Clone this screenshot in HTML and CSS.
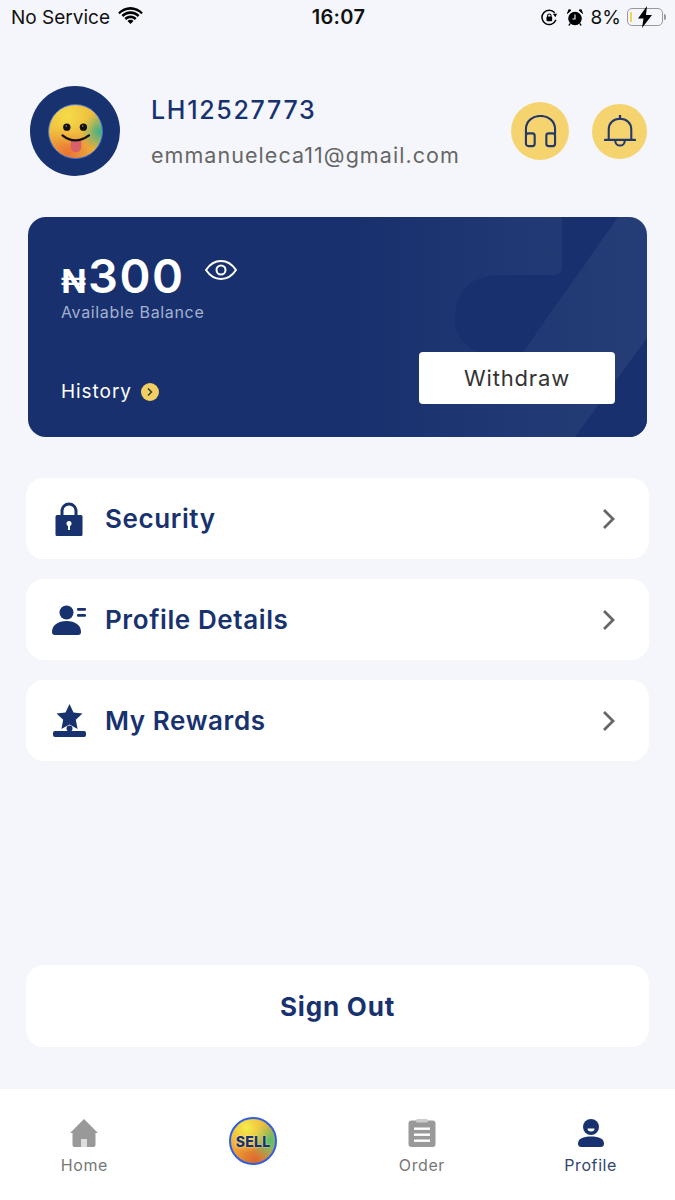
FILE: index.html
```html
<!DOCTYPE html>
<html>
	<head>
		<meta charset="utf-8" />
		<title>Profile</title>
		<link rel="stylesheet" href="styles.css">
	</head>
	<body>
		<div class="page">
			<div class="status">
				<div class="status_left">
					<span>No Service</span>
					<svg class="wifi" viewBox="0 0 26 18"><path d="M13 3C8.500 3 4.500 4.800 1.500 7.700L0 5.700C3.500 2.300 8 0 13 0s9.500 2.300 13 5.700l-1.500 2C21.500 4.800 17.500 3 13 3z"/><path d="M13 7.500c-3 0-5.700 1.200-7.700 3.100L3.500 8.400C6 6 9.300 4.500 13 4.500S20 6 22.500 8.400l-1.800 2.200C18.700 8.700 16 7.500 13 7.500z"/><path d="M13 12c-1.800 0-3.400.7-4.600 1.800L6.600 11.600C8.300 10 10.500 9 13 9s4.700 1 6.400 2.600l-1.800 2.200C16.400 12.700 14.800 12 13 12z"/><path d="M13 13.500c-1.300 0-2.400.5-3.200 1.200L13 18l3.200-3.300c-.8-.7-1.900-1.200-3.200-1.200z"/></svg>
				</div>
				<div class="status_time">16:07</div>
				<div class="status_right">
					<svg class="rot" viewBox="0 0 18 18"><path d="M15.800 11.500A7.600 7.600 0 1 1 14.500 4" fill="none" stroke="#000" stroke-width="1.600"/><path d="M12.500 5h4.500l-1.800 3.800z"/><rect x="5.800" y="8" width="6" height="5" rx="1"/><path d="M7 8.500V7a1.800 1.800 0 0 1 3.600 0v1.500" fill="none" stroke="#000" stroke-width="1.100"/></svg>
					<svg class="alarm" viewBox="0 0 16 17"><circle cx="8" cy="9.500" r="6.800"/><path d="M0.500 4.500L4 1.200 1.800.700zM15.500 4.500L12 1.200 14.200.700z" stroke="#000"/><path d="M8 5.500V10H5.500" fill="none" stroke="#f4f6fc" stroke-width="1.100"/><path d="M3 14.500L2 16.500M13 14.500l1 2" stroke="#000" stroke-width="1.500"/></svg>
					<span class="pct">8%</span>
					<div class="battery">
						<div class="battery_body"><span class="battery_level"></span></div>
						<span class="battery_nub"></span>
						<svg class="bolt" viewBox="0 0 14 22"><path d="M9 0L0 12.500h5.500L4 22l10-13H8z"/></svg>
					</div>
				</div>
			</div>

			<div class="head">
				<div class="avatar">
					<div class="face">
						<svg viewBox="0 0 55 55"><circle cx="18.500" cy="23" r="3.800" fill="#111"/><circle cx="35.700" cy="23" r="3.800" fill="#111"/><circle cx="17.800" cy="21.800" r=".7" fill="#aaa"/><circle cx="35" cy="21.800" r=".7" fill="#aaa"/><path d="M22.500 36h11v7.500a5.500 5.500 0 0 1-11 0z" fill="#d9606a"/><path d="M14 31.500Q27 42 41.500 31.500" fill="none" stroke="#111" stroke-width="2.400" stroke-linecap="round"/></svg>
					</div>
				</div>
				<div class="who">
					<div class="who_id">LH12527773</div>
					<div class="who_mail">emmanueleca11@gmail.com</div>
				</div>
				<div class="round_btn headset">
					<svg viewBox="0 0 34 34"><path d="M2 20V14.500C2 6.500 8.500 1 17 1s15 5.500 15 13.500V20" fill="none" stroke="#24386a" stroke-width="2.200"/><rect x="2" y="19" width="9" height="13" rx="2.500" fill="none" stroke="#24386a" stroke-width="2.200"/><rect x="23" y="19" width="9" height="13" rx="2.500" fill="none" stroke="#24386a" stroke-width="2.200"/></svg>
				</div>
				<div class="round_btn bell">
					<svg viewBox="0 0 34 34"><path d="M5 26V15.500C5 8.500 10 4 17 4s12 4.500 12 11.500V26" fill="none" stroke="#24386a" stroke-width="2.200"/><path d="M1 26.500h32" stroke="#24386a" stroke-width="2.400" stroke-linecap="round"/><path d="M17 0.500v3.500" stroke="#24386a" stroke-width="2.400" stroke-linecap="round"/><path d="M12 27.500a5 5 0 0 0 10 0" fill="none" stroke="#24386a" stroke-width="2.200"/></svg>
				</div>
			</div>

			<div class="card">
				<svg class="card_bg" viewBox="0 0 619 220">
					<defs>
						<linearGradient id="band" x1="0" y1="0" x2="1" y2="0">
							<stop offset="0" stop-color="#fff" stop-opacity="0"/>
							<stop offset="0.8" stop-color="#fff" stop-opacity="0.05"/>
							<stop offset="1" stop-color="#fff" stop-opacity="0.06"/>
						</linearGradient>
					</defs>
					<rect x="320" y="0" width="299" height="220" fill="url(#band)"/>
					<path d="M534 0H590L495 135H450Q427 125 427 103Q427 58 474 58H526Q534 58 534 50Z" fill="#18316e"/>
					<path d="M619 121L547 220H619Z" fill="#18316e"/>
				</svg>
				<div class="balance">
					<span class="naira">₦</span><span class="amount">300</span>
					<svg class="eye" viewBox="0 0 32 20"><path d="M1 10C5 4 10 1 16 1s11 3 15 9c-4 6-9 9-15 9S5 16 1 10z" fill="none" stroke="#fff" stroke-width="2"/><circle cx="16" cy="10" r="4.500" fill="none" stroke="#fff" stroke-width="2"/></svg>
				</div>
				<div class="balance_label">Available Balance</div>
				<div class="card_foot">
					<div class="history">
						<span>History</span>
						<svg class="history_dot" viewBox="0 0 18 18"><circle cx="9" cy="9" r="9" fill="#f2cf63"/><path d="M7 5.500L10.500 9 7 12.500" fill="none" stroke="#3a3a2a" stroke-width="1.500"/></svg>
					</div>
					<div class="withdraw">Withdraw</div>
				</div>
			</div>

			<div class="rows">
				<div class="row">
					<div class="row_icon">
						<svg class="i_lock" viewBox="0 0 28 34"><path d="M7 15V9a7 7 0 0 1 14 0v6" fill="none" stroke="#18326f" stroke-width="3"/><path d="M2 13h24a1.500 1.500 0 0 1 1.500 1.500v18A1.500 1.500 0 0 1 26 34H2A1.500 1.500 0 0 1 .5 32.500v-18A1.500 1.500 0 0 1 2 13z" fill="#18326f"/><circle cx="14" cy="21.500" r="2.500" fill="#fff"/><rect x="13" y="22" width="2" height="6" fill="#fff"/></svg>
					</div>
					<span class="row_text">Security</span>
					<svg class="chev" viewBox="0 0 14 22"><path d="M2 2l9 9-9 9" fill="none" stroke="#666" stroke-width="2.800"/></svg>
				</div>
				<div class="row">
					<div class="row_icon">
						<svg class="i_person" viewBox="0 0 34 30"><circle cx="14.500" cy="7.500" r="7"/><path d="M0 27C0 20 6 16 14.500 16S29 20 29 27a3 3 0 0 1-3 3H3a3 3 0 0 1-3-3z"/><rect x="25" y="3" width="9" height="2.800" rx="1"/><rect x="25" y="9" width="9" height="2.800" rx="1"/></svg>
					</div>
					<span class="row_text">Profile Details</span>
					<svg class="chev" viewBox="0 0 14 22"><path d="M2 2l9 9-9 9" fill="none" stroke="#666" stroke-width="2.800"/></svg>
				</div>
				<div class="row">
					<div class="row_icon">
						<svg class="i_reward" viewBox="0 0 33 33"><path d="M16.500 0l4 8.500 9 1-6.700 6.300 1.800 9.200-8.100-4.600L8.400 25l1.800-9.200L3.500 9.500l9-1z"/><circle cx="16.500" cy="24.500" r="3"/><rect x="0" y="27" width="33" height="6" rx="2"/></svg>
					</div>
					<span class="row_text">My Rewards</span>
					<svg class="chev" viewBox="0 0 14 22"><path d="M2 2l9 9-9 9" fill="none" stroke="#666" stroke-width="2.800"/></svg>
				</div>
			</div>

			<div class="signout">Sign Out</div>

			<div class="tabs">
				<div class="tab">
					<svg class="tab_icon" viewBox="0 0 28 28"><path d="M14 0L28 14h-2.500v12a2 2 0 0 1-2 2h-19a2 2 0 0 1-2-2V14H0z" fill="#999"/><rect x="11" y="20" width="6" height="8" fill="#ddd"/></svg>
					<span class="tab_text">Home</span>
				</div>
				<div class="tab">
					<div class="sell"><span>SELL</span></div>
				</div>
				<div class="tab">
					<svg class="tab_icon" viewBox="0 0 28 28"><rect x="0.500" y="1.500" width="27" height="26.500" rx="3" fill="#999"/><rect x="8" y="0" width="12" height="3.500" rx="1.500" fill="#ccc"/><rect x="6" y="8.500" width="16" height="2.400" fill="#fff"/><rect x="6" y="14.500" width="16" height="2.400" fill="#fff"/><rect x="6" y="20.500" width="16" height="2.400" fill="#fff"/></svg>
					<span class="tab_text">Order</span>
				</div>
				<div class="tab on">
					<svg class="tab_icon" viewBox="0 0 26 28"><circle cx="13" cy="8" r="8" fill="#18326f"/><path d="M9.500 9.500h7a3.500 3 0 0 1-7 0z" fill="#fff"/><path d="M0 24.500C0 20 5 17.500 13 17.500S26 20 26 24.500A3.500 3.500 0 0 1 22.500 28h-19A3.500 3.500 0 0 1 0 24.500z" fill="#18326f"/></svg>
					<span class="tab_text">Profile</span>
				</div>
			</div>
		</div>
	</body>
</html>
```

FILE: styles.css
```css
*{
	margin:0;
	padding:0;
	box-sizing: border-box;
}
body{
	background:#f4f6fc;
	font-family: Inter, "Noto Sans", sans-serif;
}
svg{display: block;}
.page{
	width:675px;
	height:1200px;
	display: flex;
	flex-direction: column;
	overflow: hidden;
}

/* status bar */
.status{
	height:34px;
	display: grid;
	grid-template-columns: 1fr auto 1fr;
	align-items: center;
	padding: 0 9px 0 11px;
	font-size:19px;
	color:#111;
}
.status_left{
	display: flex;
	align-items: center;
	gap:8px;
}
.wifi{width:25px;height:17px;margin-top:-3px;}
.status_time{font-weight:600;font-size:20px;letter-spacing:.3px;}
.status_right{
	display: flex;
	align-items: center;
	justify-content: flex-end;
}
.rot{width:17px;height:17px;margin-right:9px;}
.alarm{width:16px;height:17px;margin-right:8px;}
.pct{margin-right:6px;}
.battery{
	position: relative;
	display: flex;
	align-items: center;
	width:39px;
	height:18px;
}
.battery_body{
	width:36px;
	height:18px;
	border:1px solid #999;
	border-radius:5px;
	padding:3px 2px;
}
.battery_level{
	display: block;
	width:2px;
	height:100%;
	background:#f2d45c;
}
.battery_nub{
	width:2px;
	height:6px;
	margin-left:1px;
	background:#999;
	border-radius:0 2px 2px 0;
}
.bolt{
	position: absolute;
	left:11px;
	top:-2px;
	width:14px;
	height:22px;
}

/* head */
.head{
	display: flex;
	align-items: center;
	margin-top:52px;
	padding:0 28px 0 30px;
}
.avatar{
	width:90px;
	height:90px;
	background:#18326f;
	border-radius:50%;
	display: flex;
	align-items: center;
	justify-content: center;
	flex: none;
}
.face{
	width:55px;
	height:55px;
	border-radius:50%;
	border:1.500px solid #3a6de0;
	background:
		radial-gradient(circle at 35% 20%, #f5dc4a 0, rgba(245,220,74,0) 55%),
		radial-gradient(circle at 96% 50%, #3fb08a 0, rgba(63,176,138,0) 34%),
		radial-gradient(circle at 35% 92%, #ea7434 0, rgba(234,116,52,0) 50%),
		#efb63a;
}
.face svg{width:100%;height:100%;}
.who{
	margin-left:31px;
	margin-top:2px;
	flex:1;
}
.who_id{
	font-size:25px;
	font-weight:500;
	line-height:30px;
	letter-spacing:1.700px;
	color:#18326f;
}
.who_mail{
	margin-top:16px;
	font-size:21.500px;
	line-height:28px;
	letter-spacing:1.050px;
	color:#666;
}
.round_btn{
	background:#f5d46f;
	border-radius:50%;
	display: flex;
	align-items: center;
	justify-content: center;
	flex: none;
}
.headset{width:58px;height:58px;margin-right:23px;}
.headset svg{width:33px;height:33px;}
.bell{width:55px;height:55px;}
.bell svg{width:32px;height:32px;}

/* balance card */
.card{
	position: relative;
	height:220px;
	margin:41px 28px 0;
	padding:32px 32px 33px 33px;
	background:#18316e;
	border-radius:18px;
	overflow: hidden;
	display: flex;
	flex-direction: column;
	color:#fff;
}
.card_bg{
	position: absolute;
	left:0;
	top:0;
	width:619px;
	height:220px;
}
.balance{
	position: relative;
	display: flex;
	align-items: baseline;
	height:54px;
	line-height:54px;
}
.naira{
	font-size:33px;
	font-weight:700;
	margin-right:2px;
}
.amount{
	font-size:47px;
	font-weight:600;
	letter-spacing:1.500px;
}
.eye{
	width:32px;
	height:20px;
	margin-left:21px;
	align-self: flex-start;
	margin-top:11px;
}
.balance_label{
	position: relative;
	font-size:16px;
	line-height:18px;
	letter-spacing:.65px;
	color:#a3b0cf;
}
.card_foot{
	position: relative;
	display: flex;
	justify-content: space-between;
	align-items: flex-end;
	margin-top:auto;
}
.history{
	display: flex;
	align-items: center;
	gap:9px;
	font-size:19px;
	line-height:25px;
	letter-spacing:.95px;
}
.history_dot{width:18px;height:18px;}
.withdraw{
	width:196px;
	height:52px;
	background:#fff;
	border-radius:4px;
	color:#333;
	font-size:22px;
	letter-spacing:.85px;
	display: flex;
	align-items: center;
	justify-content: center;
}

/* rows */
.rows{
	display: flex;
	flex-direction: column;
	gap:20px;
	margin:41px 26px 0;
}
.row{
	height:81px;
	background:#fff;
	border-radius:18px;
	display: flex;
	align-items: center;
	padding:0 33px 0 26px;
}
.row_icon{
	width:34px;
	display: flex;
	justify-content: center;
	fill:#18326f;
	margin-right:19px;
}
.i_lock{width:28px;height:34px;}
.i_person{width:34px;height:30px;}
.i_reward{width:33px;height:33px;}
.row_text{
	flex:1;
	font-size:26px;
	font-weight:600;
	letter-spacing:.6px;
	color:#18326f;
}
.chev{width:14px;height:22px;}

.signout{
	height:82px;
	margin:auto 26px 42px;
	background:#fff;
	border-radius:18px;
	display: flex;
	align-items: center;
	justify-content: center;
	font-size:26px;
	font-weight:700;
	letter-spacing:.8px;
	color:#18326f;
}

/* bottom tabs */
.tabs{
	height:111px;
	background:#fff;
	display: grid;
	grid-template-columns: repeat(4, 1fr);
	padding-top:29px;
}
.tab{
	display: flex;
	flex-direction: column;
	align-items: center;
}
.tab_icon{height:30px;padding:1px 0;width:28px;}
.tab_text{
	margin-top:6px;
	font-size:16px;
	line-height:22px;
	letter-spacing:.6px;
	color:#777;
}
.on .tab_text{color:#33466f;}
.sell{
	width:48px;
	height:48px;
	margin-top:-1px;
	border-radius:50%;
	border:2px solid #2f5fe0;
	display: flex;
	align-items: center;
	justify-content: center;
	background:
		radial-gradient(circle at 35% 20%, #f5ec4c 0, rgba(245,236,76,0) 55%),
		radial-gradient(circle at 88% 50%, #58bf6e 0, rgba(88,191,110,0) 45%),
		radial-gradient(circle at 55% 95%, #d9662f 0, rgba(217,102,47,0) 50%),
		#f0a436;
}
.sell span{
	font-size:14px;
	font-weight:800;
	letter-spacing:.3px;
	color:#18326f;
	text-shadow: 0 0 2px rgba(255,255,255,.7);
}
```
